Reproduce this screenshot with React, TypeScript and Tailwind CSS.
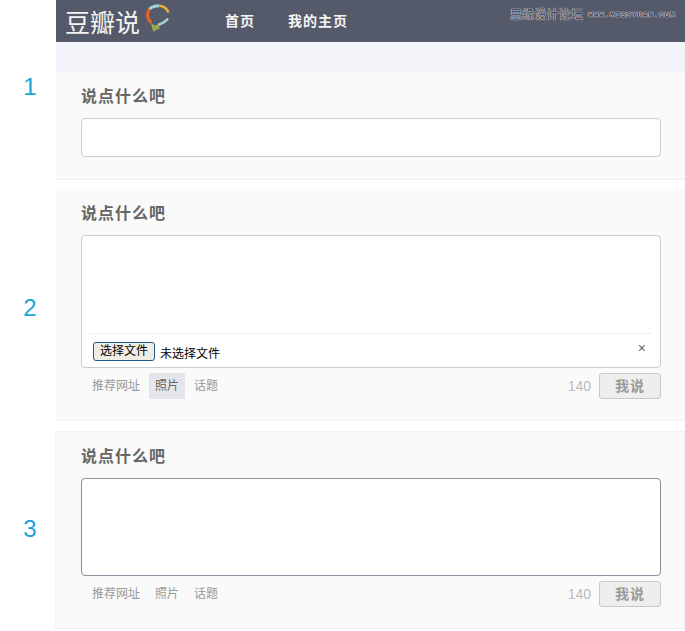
const CJK = "font-['Liberation_Sans','Noto_Sans_CJK_SC',sans-serif]";

function Logo() {
  return (
    <svg width="28" height="30" viewBox="0 0 28 30" className="ml-[3px] mt-[3px] shrink-0" fill="none">
      <path d="M8 19.5 Q4.5 16 4.5 12 Q4.5 8.5 6.5 6" stroke="#e8641f" strokeWidth="3" />
      <path d="M6.5 6 Q10 2.8 16.5 2.8" stroke="#9fd4dc" strokeWidth="3" />
      <path d="M16.5 2.8 Q23 3.5 25.5 9.5" stroke="#eeb02e" strokeWidth="2.5" />
      <path d="M25 15.5 Q22 19.5 15 22" stroke="#a8d0c8" strokeWidth="2.5" />
      <path d="M7.7 19.7 L12 22.5 L15 21.5 L17 25 L10.3 28.7 Z" fill="#9aa84a" />
    </svg>
  );
}

function Header() {
  return (
    <div className="h-[42px] bg-[#555a6a] flex items-center relative">
      <div className="flex items-start w-[169px] h-full shrink-0">
        <span className={`${CJK} ml-[9px] mt-[5px] text-[25px] leading-[36px] font-normal text-[#f4f4f4] whitespace-nowrap`}>豆瓣说</span>
        <Logo />
      </div>
      <a className={`${CJK} text-sm font-bold text-[#f5f5f5] tracking-[1px]`}>首页</a>
      <a className={`${CJK} ml-[33px] text-sm font-bold text-[#f5f5f5] tracking-[1px]`}>我的主页</a>
      <div className="absolute left-[454px] top-[7px] flex items-center gap-[5px] text-[#3c3e48] [text-shadow:0_0_1px_#e0e0e8,0_0_1px_#e0e0e8,0_0_1px_#e0e0e8]">
        <span className={`${CJK} text-xs leading-4 tracking-[0.2px]`}>思缘设计论坛</span>
        <span className="font-['Liberation_Mono',monospace] text-[8px] leading-4 font-bold tracking-[0.65px]">WWW.MISSYUAN.COM</span>
      </div>
    </div>
  );
}

function Toolbar({ active }: { active?: boolean }) {
  return (
    <div className="flex items-center h-[26px] mt-[5px]">
      <span className={`${CJK} ml-[11px] text-xs text-[#999]`}>推荐网址</span>
      <span className={`${CJK} ml-[9px] h-[26px] w-[36px] flex items-center justify-center text-xs ${active ? "bg-[#e5e6ec] text-[#666]" : "text-[#999]"}`}>照片</span>
      <span className={`${CJK} ml-[9px] text-xs text-[#999]`}>话题</span>
      <span className="ml-auto font-['Liberation_Sans',sans-serif] text-sm text-[#bbb]">140</span>
      <button className={`${CJK} ml-[8px] w-[62px] h-[26px] bg-[#eeeeee] border border-[#c8c8c8] rounded-[3px] text-sm font-bold text-[#999] tracking-[1px]`}>我说</button>
    </div>
  );
}

function Title() {
  return <h2 className={`${CJK} text-base leading-[22px] font-bold text-[#666] tracking-[1px]`}>说点什么吧</h2>;
}

function Row({ num, offset, children }: { num: number; offset: string; children: React.ReactNode }) {
  return (
    <div className="flex">
      <div className={`w-14 shrink-0 flex items-center justify-center pl-[4px] ${offset}`}>
        <span className="font-['Liberation_Sans',sans-serif] text-2xl text-[#19a3d8]">{num}</span>
      </div>
      <div className="flex-1 min-w-0">{children}</div>
    </div>
  );
}

export default function App() {
  return (
    <div className="w-[685px] h-[631px] bg-white overflow-hidden">
      <Row num={1} offset="pb-[6px]">
        <Header />
        <div className="h-[30px] bg-[#f3f4f9]" />
        <div className="h-[108px] bg-[#fafafa] border-b border-[#f0f0f0] pl-[25px] pr-6 pt-[14px]">
          <Title />
          <div className="h-[39px] mt-[10px] bg-white border border-[#cccccc] rounded" />
        </div>
      </Row>

      <div className="mt-[9px]">
        <Row num={2} offset="pt-[6px]">
          <div className="h-[232px] bg-[#fafafa] border-b border-[#f0f0f0] pl-[25px] pr-6 pt-[14px]">
            <Title />
            <div className="h-[133px] mt-[10px] bg-white border border-[#cccccc] rounded flex flex-col justify-end px-2">
              <div className="h-[34px] border-t border-[#eeeeee] flex items-start pl-[3px] relative">
                <button className={`${CJK} mt-[8px] w-[62px] h-[19px] bg-[#f0ede4] border border-[#1f5a8c] rounded-[3px] text-xs leading-[15px] text-black`}>选择文件</button>
                <span className={`${CJK} ml-[5px] mt-[12px] text-xs leading-4 text-black`}>未选择文件</span>
                <span className="absolute right-[6px] top-[6px] font-['Liberation_Sans',sans-serif] text-sm leading-4 text-[#666]">×</span>
              </div>
            </div>
            <Toolbar active />
          </div>
        </Row>
      </div>

      <div className="mt-[10px]">
        <Row num={3} offset="pb-[2px]">
          <div className="-ml-px h-[198px] bg-[#fafafa] border border-[#f2f2f2] rounded-tl-[3px] pl-[25px] pr-[23px] pt-[14px]">
            <Title />
            <div className="h-[98px] mt-[10px] bg-white border border-[#8f8e9e] rounded" />
            <Toolbar />
          </div>
        </Row>
      </div>
    </div>
  );
}
